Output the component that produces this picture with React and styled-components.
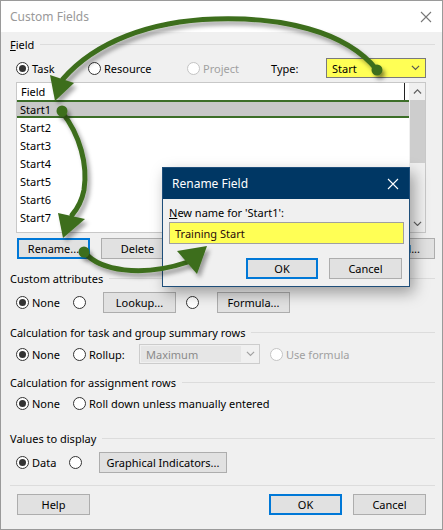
import React from "react";
import styled, { createGlobalStyle, css } from "styled-components";

const Global = createGlobalStyle`
  html, body { margin: 0; padding: 0; background: #ffffff; }
  body { font-family: "Noto Sans", "Open Sans", sans-serif; font-size: 11px; color: #000; }
  * { box-sizing: border-box; }
`;

const Window = styled.div`
  position: relative;
  width: 443px;
  height: 530px;
  border: 1px solid #9a9a9a;
  background: #f0f0f0;
  overflow: hidden;
`;

const TitleBar = styled.div`
  height: 31px;
  background: #ffffff;
  display: flex;
  align-items: center;
  justify-content: space-between;
  padding: 0 10px 0 9px;
  color: #999999;
  font-size: 12px;
`;

const Body = styled.div`
  display: flex;
  flex-direction: column;
  padding: 5px 7px 0 9px;
`;

const GroupHeader = styled.div`
  display: flex;
  align-items: center;
  height: 14px;
  margin-top: ${(p) => p.mt || 0}px;
  white-space: nowrap;
  &::after {
    content: "";
    flex: 1;
    height: 1px;
    background: #dcdcdc;
    margin-left: 6px;
  }
  u { text-decoration: underline; }
`;

const Row = styled.div`
  display: flex;
  align-items: center;
  height: ${(p) => p.h || 20}px;
  margin-top: ${(p) => p.mt || 0}px;
  margin-left: ${(p) => (p.ml === undefined ? 6 : p.ml)}px;
  white-space: nowrap;
`;

const RadioItem = styled.label`
  display: inline-flex;
  align-items: center;
  width: ${(p) => (p.w ? `${p.w}px` : "auto")};
  margin-left: ${(p) => p.ml || 0}px;
  flex-shrink: 0;
  color: ${(p) => (p.disabled ? "#a0a0a0" : "#000")};
`;

const Circle = styled.span`
  width: 13px;
  height: 13px;
  border-radius: 50%;
  border: 1px solid ${(p) => (p.disabled ? "#c4c4c4" : "#333")};
  background: #fff;
  display: inline-flex;
  align-items: center;
  justify-content: center;
  margin-right: 3px;
  flex-shrink: 0;
  &::after {
    content: "";
    width: 7px;
    height: 7px;
    border-radius: 50%;
    background: ${(p) => (p.checked ? "#333" : "transparent")};
  }
`;

const Radio = ({ label, checked, disabled, w, ml }) => (
  <RadioItem w={w} ml={ml} disabled={disabled}>
    <Circle checked={checked} disabled={disabled} />
    {label}
  </RadioItem>
);

const Button = styled.div`
  width: ${(p) => p.w || 73}px;
  height: 21px;
  margin-left: ${(p) => p.ml || 0}px;
  flex-shrink: 0;
  background: #e1e1e1;
  border: 1px solid #adadad;
  display: flex;
  align-items: center;
  justify-content: center;
  white-space: nowrap;
  overflow: hidden;
  ${(p) =>
    p.focus &&
    css`
      border: 2px solid #0078d7;
    `}
`;

const Spacer = styled.div`
  flex: ${(p) => (p.w ? `0 0 ${p.w}px` : 1)};
`;

const TypeLabel = styled.span`
  width: ${(p) => p.w}px;
  flex-shrink: 0;
`;

const YellowCombo = styled.div`
  width: 100px;
  height: 20px;
  background: #ffff55;
  border: 1px solid #7a7a7a;
  display: flex;
  align-items: center;
  justify-content: space-between;
  padding: 0 5px 0 5px;
`;

const GrayCombo = styled.div`
  width: 121px;
  height: 20px;
  border: 1px solid #cccccc;
  background: #f0f0f0;
  display: flex;
  align-items: stretch;
  flex-shrink: 0;
  color: #8a8a8a;
`;

const ComboText = styled.div`
  flex: 1;
  background: #e6e6e6;
  margin: 1px 0 1px 1px;
  display: flex;
  align-items: center;
  padding-left: 5px;
`;

const ComboArrow = styled.div`
  width: 18px;
  display: flex;
  align-items: center;
  justify-content: center;
`;

const ListBox = styled.div`
  display: flex;
  width: 410px;
  height: 151px;
  margin-top: 4px;
  margin-left: 6px;
  border: 1px solid #c8c8c8;
  background: #fff;
`;

const ListMain = styled.div`
  flex: 1;
  display: flex;
  flex-direction: column;
  overflow: hidden;
`;

const ListHeader = styled.div`
  height: 17px;
  flex-shrink: 0;
  display: flex;
  align-items: center;
  padding-left: 4px;
  position: relative;
  &::after {
    content: "";
    position: absolute;
    right: 4px;
    top: 0;
    bottom: 0;
    width: 1px;
    background: #222;
  }
`;

const ListRow = styled.div`
  height: 18px;
  flex-shrink: 0;
  display: flex;
  align-items: center;
  padding-left: 3px;
  ${(p) =>
    p.selected &&
    css`
      background: #c8c8c8;
      border-top: 2px solid #3c6e28;
      border-bottom: 2px solid #3c6e28;
    `}
`;

const ScrollBar = styled.div`
  width: 16px;
  background: #f0f0f0;
  display: flex;
  flex-direction: column;
  align-items: center;
`;

const ScrollArrow = styled.div`
  height: 17px;
  width: 100%;
  display: flex;
  align-items: center;
  justify-content: center;
`;

const Thumb = styled.div`
  width: 15px;
  height: 63px;
  background: #cdcdcd;
`;

const Separator = styled.div`
  height: 1px;
  background: #dcdcdc;
  margin-top: 12px;
`;

const Dialog = styled.div`
  position: absolute;
  left: 161px;
  top: 166px;
  width: 248px;
  height: 120px;
  border: 1px solid #1e4e7a;
  background: #f0f0f0;
  box-shadow: 4px 6px 14px rgba(0, 0, 0, 0.35);
  display: flex;
  flex-direction: column;
`;

const DialogTitle = styled.div`
  height: 31px;
  background: #003764;
  color: #fff;
  font-size: 12px;
  display: flex;
  align-items: center;
  justify-content: space-between;
  padding: 0 10px 0 9px;
`;

const DialogBody = styled.div`
  display: flex;
  flex-direction: column;
  padding: 6px 5px 0 6px;
`;

const Input = styled.div`
  height: 22px;
  margin-top: 2px;
  background: #ffff55;
  border: 1px solid #a0a0a0;
  display: flex;
  align-items: center;
  padding-left: 5px;
  color: #2a0a0a;
`;

const DialogButtons = styled.div`
  display: flex;
  justify-content: flex-end;
  margin-top: 14px;
  padding-right: 2px;
`;

const Overlay = styled.svg`
  position: absolute;
  left: -1px;
  top: -1px;
  pointer-events: none;
`;

const Chevron = ({ dir = "down", color = "#555", size = 10 }) => (
  <svg width={size} height={size * 0.6} viewBox="0 0 10 6">
    <path
      d={dir === "down" ? "M1 1 L5 5 L9 1" : "M1 5 L5 1 L9 5"}
      fill="none"
      stroke={color}
      strokeWidth="1.3"
    />
  </svg>
);

const CloseX = ({ color }) => (
  <svg width="12" height="12" viewBox="0 0 12 12">
    <path d="M1 1 L11 11 M11 1 L1 11" stroke={color} strokeWidth="1.1" />
  </svg>
);

const green = "#3d6e1d";

const Arrows = () => (
  <Overlay width="443" height="530" viewBox="0 0 443 530">
    <defs>
      <filter id="sh" x="-20%" y="-20%" width="140%" height="140%">
        <feDropShadow dx="3" dy="4" stdDeviation="2.2" floodColor="#000" floodOpacity="0.35" />
      </filter>
    </defs>
    <g filter="url(#sh)" fill="none" stroke={green} strokeWidth="5" strokeLinecap="round">
      <path d="M377 70 C345 30 280 17 215 19 C150 21 95 42 63 79" />
      <path d="M62 112 C80 135 88 165 84 190 C82 200 78 208 72 215" />
      <path d="M85 253 C100 270 140 278 188 262" />
    </g>
    <g filter="url(#sh)" fill={green}>
      <circle cx="377" cy="70" r="5.5" />
      <circle cx="62" cy="111" r="5.5" />
      <circle cx="84" cy="252" r="5.5" />
      <polygon points="50,75 74,83 55,101" />
      <polygon points="58,213 85,219 63,238" />
      <polygon points="177,251 197,274 207,246" />
    </g>
  </Overlay>
);

const rows = ["Start1", "Start2", "Start3", "Start4", "Start5", "Start6", "Start7", "Start8"];

export default function App() {
  return (
    <>
      <Global />
      <Window>
        <TitleBar>
          <span>Custom Fields</span>
          <CloseX color="#777" />
        </TitleBar>
        <Body>
          <GroupHeader mt={0}>
            <span>
              <u>F</u>ield
            </span>
          </GroupHeader>
          <Row mt={7}>
            <Radio label="Task" checked w={72} />
            <Radio label="Resource" w={99} />
            <Radio label="Project" disabled w={84} />
            <TypeLabel w={55}>Type:</TypeLabel>
            <YellowCombo>
              <span>Start</span>
              <Chevron color="#555" size={9} />
            </YellowCombo>
          </Row>
          <ListBox>
            <ListMain>
              <ListHeader>Field</ListHeader>
              {rows.map((r, i) => (
                <ListRow key={r} selected={i === 0}>
                  {r}
                </ListRow>
              ))}
            </ListMain>
            <ScrollBar>
              <ScrollArrow>
                <Chevron dir="up" color="#606060" size={9} />
              </ScrollArrow>
              <Thumb />
              <Spacer />
              <ScrollArrow>
                <Chevron color="#606060" size={9} />
              </ScrollArrow>
            </ScrollBar>
          </ListBox>
          <Row mt={5} h={21} ml={7}>
            <Button focus w={73}>Rename...</Button>
            <Button ml={11} w={73}>Delete</Button>
            <Spacer />
            <Button w={102}>Import Field...</Button>
          </Row>
          <GroupHeader mt={12}>Custom attributes</GroupHeader>
          <Row mt={7} h={21}>
            <Radio label="None" checked w={57} />
            <Radio w={30} />
            <Button w={73}>Lookup...</Button>
            <Radio w={31} ml={10} />
            <Button w={73}>Formula...</Button>
          </Row>
          <GroupHeader mt={12}>Calculation for task and group summary rows</GroupHeader>
          <Row mt={5}>
            <Radio label="None" checked w={57} />
            <Radio label="Rollup:" w={66} />
            <GrayCombo>
              <ComboText>Maximum</ComboText>
              <ComboArrow>
                <Chevron color="#a0a0a0" size={9} />
              </ComboArrow>
            </GrayCombo>
            <Radio label="Use formula" disabled ml={10} />
          </Row>
          <GroupHeader mt={11}>Calculation for assignment rows</GroupHeader>
          <Row mt={4}>
            <Radio label="None" checked w={57} />
            <Radio label="Roll down unless manually entered" />
          </Row>
          <GroupHeader mt={18}>Values to display</GroupHeader>
          <Row mt={7} h={21}>
            <Radio label="Data" checked w={53} />
            <Radio w={30} />
            <Button w={128}>Graphical Indicators...</Button>
          </Row>
          <Separator />
          <Row mt={8} h={21} ml={7}>
            <Button w={73}>Help</Button>
            <Spacer />
            <Button focus w={73}>OK</Button>
            <Button ml={11} w={73}>Cancel</Button>
            <Spacer w={9} />
          </Row>
        </Body>
        <Dialog>
          <DialogTitle>
            <span>Rename Field</span>
            <CloseX color="#fff" />
          </DialogTitle>
          <DialogBody>
            <span>
              <u>N</u>ew name for 'Start1':
            </span>
            <Input>Training Start</Input>
            <DialogButtons>
              <Button focus w={72}>OK</Button>
              <Button ml={11} w={73}>Cancel</Button>
            </DialogButtons>
          </DialogBody>
        </Dialog>
        <Arrows />
      </Window>
    </>
  );
}
